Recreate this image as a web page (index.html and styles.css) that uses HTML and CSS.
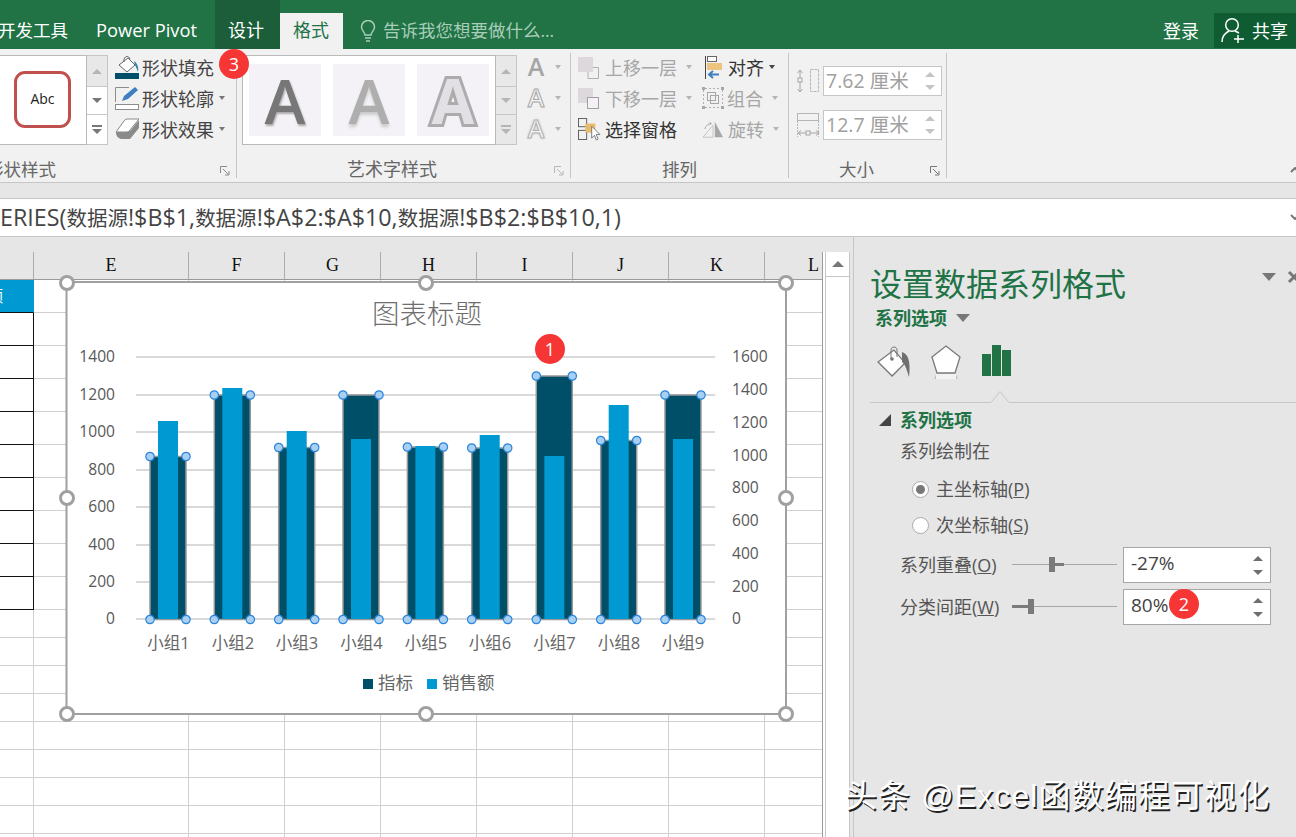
FILE: index.html
```html
<!DOCTYPE html>
<html lang="zh-CN">
<head>
<meta charset="utf-8">
<title>设置数据系列格式</title>
<link rel="stylesheet" href="styles.css">
</head>
<body>
<div class="app">
  <header class="tabs">
    <span class="tab-plain first">开发工具</span>
    <span class="tab-plain pivot">Power Pivot</span>
    <span class="tab-ctx">设计</span>
    <span class="tab-active">格式</span>
    <div class="tellme">
      <svg class="bulb" viewBox="0 0 16 22" width="16" height="22"><path d="M5 15c0-3-3.500-4-3.500-8a6.500 6.500 0 0 1 13 0c0 4-3.500 5-3.500 8z" fill="none" stroke="#a8cdb8" stroke-width="1.500"/><path d="M5 18h6M6 21h4" stroke="#a8cdb8" stroke-width="1.500"/></svg>
      <span>告诉我您想要做什么...</span>
    </div>
    <span class="login">登录</span>
    <div class="share">
      <svg viewBox="0 0 24 26" width="24" height="26"><circle cx="11" cy="8" r="6.300" fill="none" stroke="#fff" stroke-width="1.500"/><path d="M1 25c0-6 3-9 7-11M14 14l4 2" fill="none" stroke="#fff" stroke-width="1.500"/><path d="M17 18v8M13 22h10" stroke="#fff" stroke-width="1.500"/></svg>
      <span>共享</span>
    </div>
  </header>

  <section class="ribbon">
    <div class="group g-shape">
      <div class="group-body">
        <div class="gallery gal-shape"><div class="abc">Abc</div></div>
        <div class="gal-scroll">
          <div class="gal-btn h1 off"><i class="tri-up"></i></div>
          <div class="gal-btn h2"><i class="tri-down"></i></div>
          <div class="gal-btn h3"><i class="tri-more"></i></div>
        </div>
        <div class="cmds c-shape">
          <div class="cmd">
            <svg class="ic24" viewBox="0 0 24 24" width="24" height="24"><rect y="18" width="24" height="6" fill="#004f68"/><path d="M13 3l7 7-8 7-8-7z" fill="#fff" stroke="#666"/><path d="M9 7C8 2 13-1 15 4" fill="none" stroke="#666"/><path d="M19 6c3 2 5 6 4 11-1-3-2-5-3-7z" fill="#2f7fb0"/></svg>
            <span>形状填充</span><i class="caret"></i>
          </div>
          <div class="cmd">
            <svg class="ic24" viewBox="0 0 24 24" width="24" height="24"><rect x=".5" y="18.500" width="23" height="5" fill="#fff" stroke="#8c8c8c"/><path d="M.5 16V1.500H14" fill="none" stroke="#8c8c8c"/><path d="M7 15l2-5L20 1l3 3-10 9z" fill="#3f7fbf"/></svg>
            <span>形状轮廓</span><i class="caret"></i>
          </div>
          <div class="cmd">
            <svg class="ic24" viewBox="0 0 24 24" width="24" height="24"><path d="M1 15c0 4 2 6 5 7h9l9-11V3l-9 11H4z" fill="#8a8a8a"/><path d="M1 15L9 4q1-2 3-2h12l-9 11q-1 2-3 2z" fill="#fff" stroke="#8a8a8a"/></svg>
            <span>形状效果</span><i class="caret"></i>
          </div>
        </div>
      </div>
      <div class="group-foot foot-shape"><span>形状样式</span><svg class="launch" viewBox="0 0 10 10" width="10" height="10"><path d="M.5 7V.5H7M3 3l5 5M9 5v4H5" fill="none" stroke="#8a8a8a"/></svg></div>
    </div>

    <div class="group g-art">
      <div class="group-body">
        <div class="gallery gal-art">
          <div class="wa wa1">A</div>
          <div class="wa wa2">A</div>
          <div class="wa wa3">A</div>
        </div>
        <div class="gal-scroll">
          <div class="gal-btn h1 off"><i class="tri-up"></i></div>
          <div class="gal-btn h2 off"><i class="tri-down"></i></div>
          <div class="gal-btn h3 off"><i class="tri-more"></i></div>
        </div>
        <div class="cmds c-art">
          <div class="cmd off"><span class="mini m1">A</span><i class="caret"></i></div>
          <div class="cmd off"><span class="mini m2">A</span><i class="caret"></i></div>
          <div class="cmd off"><span class="mini m3">A</span><i class="caret"></i></div>
        </div>
      </div>
      <div class="group-foot foot-art"><span>艺术字样式</span><svg class="launch" viewBox="0 0 10 10" width="10" height="10"><path d="M.5 7V.5H7M3 3l5 5M9 5v4H5" fill="none" stroke="#b5b5b5"/></svg></div>
    </div>

    <div class="group g-arr">
      <div class="group-body">
        <div class="cmds c-arr1">
          <div class="cmd off">
            <svg class="ic21" viewBox="0 0 21 24" width="21" height="24"><rect y="2" width="15" height="15" fill="#dcd8dc"/><path d="M15 12.500h5.500v11H10V17" fill="none" stroke="#b0b0b0"/></svg>
            <span>上移一层</span><i class="caret"></i>
          </div>
          <div class="cmd off">
            <svg class="ic21" viewBox="0 0 21 24" width="21" height="24"><rect y="2" width="15" height="15" fill="#dcd8dc"/><rect x="9.500" y="11.500" width="11" height="11" fill="#f4f0f6" stroke="#a0a0a0"/></svg>
            <span>下移一层</span><i class="caret"></i>
          </div>
          <div class="cmd">
            <svg class="ic21" viewBox="0 0 23 26" width="23" height="26"><rect x=".5" y="1.500" width="9" height="9" fill="none" stroke="#555"/><rect x=".5" y="14.500" width="9" height="10" fill="none" stroke="#555"/><rect x="8" y="7" width="11" height="10" fill="#e9bb6f"/><path d="M15 10v13l3-3 2 5 2-1-2-5h4z" fill="#fff" stroke="#666" stroke-width=".9"/></svg>
            <span class="dark">选择窗格</span>
          </div>
        </div>
        <div class="cmds c-arr2">
          <div class="cmd">
            <svg class="ic22" viewBox="0 0 20 24" width="20" height="24"><path d="M.5 1v23" stroke="#444"/><rect x="2.500" y="1.500" width="9" height="5" fill="#fff" stroke="#666"/><rect x="2" y="8" width="15" height="7" fill="#ecc37f"/><path d="M14 19.500H4M8 16l-4 3.500L8 23" fill="none" stroke="#3f7fbf" stroke-width="2"/></svg>
            <span class="dark">对齐</span><i class="caret dk"></i>
          </div>
          <div class="cmd off">
            <svg class="ic-group" viewBox="0 0 22 22" width="22" height="22"><path d="M3 1.500h16M20.500 3v16M3 20.500h16M1.500 3v16" stroke="#b0b0b0" stroke-dasharray="2 2"/><path d="M0 0h3v3H0zM19 0h3v3h-3zM0 19h3v3H0zM19 19h3v3h-3z" fill="#a6a6a6"/><rect x="5.500" y="5.500" width="8" height="8" fill="none" stroke="#a6a6a6"/><rect x="8.500" y="8.500" width="8" height="8" fill="none" stroke="#a6a6a6"/></svg>
            <span>组合</span><i class="caret"></i>
          </div>
          <div class="cmd off">
            <svg class="ic-rot" viewBox="0 0 24 22" width="24" height="20"><path d="M1 20L12 7v13z" fill="none" stroke="#c0c0c0"/><path d="M14 3l9 17h-9z" fill="#a6a6a6"/><path d="M3 11c1-4 4-6 7-6M8 3l2 2-2 2" fill="none" stroke="#a6a6a6"/></svg>
            <span>旋转</span><i class="caret"></i>
          </div>
        </div>
      </div>
      <div class="group-foot"><span>排列</span></div>
    </div>

    <div class="group g-size">
      <div class="group-body sizes">
        <div class="size-row">
          <svg class="ic-size" viewBox="0 0 23 24" width="23" height="24"><path d="M3 1v22M.5 4L3 1l2.500 3M.5 20L3 23l2.500-3" fill="none" stroke="#a6a6a6"/><rect x="13.500" y=".5" width="8" height="22" fill="none" stroke="#b5b5b5" stroke-dasharray="3 1"/><rect x="1" y="9" width="4" height="4" fill="#f1f1f1" stroke="#a6a6a6"/></svg>
          <div class="size-box"><span>7.62 厘米</span><div class="spin off"><i class="tri-up"></i><i class="tri-down"></i></div></div>
        </div>
        <div class="size-row">
          <svg class="ic-size" viewBox="0 0 23 24" width="23" height="24"><rect x=".5" y=".5" width="21" height="7" fill="none" stroke="#b5b5b5"/><path d="M.5 8v16M21.500 8v16" stroke="#b5b5b5" stroke-dasharray="2 1"/><path d="M1 20h21M4 17.500L1 20l3 2.500M19 17.500l3 2.500-3 2.500" fill="none" stroke="#a6a6a6"/><rect x="9" y="18" width="4" height="4" fill="#f1f1f1" stroke="#a6a6a6"/></svg>
          <div class="size-box"><span>12.7 厘米</span><div class="spin off"><i class="tri-up"></i><i class="tri-down"></i></div></div>
        </div>
      </div>
      <div class="group-foot foot-size"><span>大小</span><svg class="launch" viewBox="0 0 10 10" width="10" height="10"><path d="M.5 7V.5H7M3 3l5 5M9 5v4H5" fill="none" stroke="#777"/></svg></div>
    </div>
    <svg class="collapse" viewBox="0 0 10 6" width="10" height="6"><path d="M1 5l4-4 4 4" fill="none" stroke="#777" stroke-width="2"/></svg>
  </section>

  <div class="strip"></div>
  <div class="formula">
    <span>ERIES(<span class="fx-cjk">数据源</span>!$B$1,<span class="fx-cjk">数据源</span>!$A$2:$A$10,<span class="fx-cjk">数据源</span>!$B$2:$B$10,1)</span>
    <svg class="fx-down" viewBox="0 0 10 6" width="10" height="6"><path d="M1 1l4 4 4-4" fill="none" stroke="#777" stroke-width="2"/></svg>
  </div>

  <main class="work">
    <div class="sheet-col">
      <div class="top-gap"></div>
      <div class="sheet-body">
        <div class="cells">
          <div class="col-heads">
            <span class="ch ch-corner"></span>
            <span class="ch ch-e">E</span>
            <span class="ch ch-n">F</span>
            <span class="ch ch-n">G</span>
            <span class="ch ch-n">H</span>
            <span class="ch ch-n">I</span>
            <span class="ch ch-n">J</span>
            <span class="ch ch-n">K</span>
            <span class="ch ch-l">L</span>
          </div>
          <div class="rows">
            <div class="row r33"><div class="tcell thead"><span>额</span></div></div>
            <div class="row r33"><div class="tcell"></div></div>
            <div class="row r33"><div class="tcell"></div></div>
            <div class="row r33"><div class="tcell"></div></div>
            <div class="row r33"><div class="tcell"></div></div>
            <div class="row r33"><div class="tcell"></div></div>
            <div class="row r33"><div class="tcell"></div></div>
            <div class="row r33"><div class="tcell"></div></div>
            <div class="row r33"><div class="tcell"></div></div>
            <div class="row r33"><div class="tcell"></div></div>
            <div class="row r28"></div>
            <div class="row r28"></div>
            <div class="row r28"></div>
            <div class="row r28"></div>
            <div class="row r28"></div>
            <div class="row r28"></div>
            <div class="row r28"></div>
            <div class="row r28"></div>
            <div class="row r28"></div>
          </div>
        </div>
        <div class="vscroll"><div class="vs-up"><i class="tri-up"></i></div></div>
      </div>

      <svg class="chart" viewBox="0 237 850 500" width="850" height="500">
        <defs>
          <g id="h"><circle r="4.200" fill="#a9d0f2" stroke="#2a86dc" stroke-width="1.200"/></g>
          <g id="k"><circle r="6.500" fill="#fff" stroke="#a0a0a0" stroke-width="3"/></g>
        </defs>
        <rect x="66.500" y="282" width="719.500" height="432" fill="#fff" stroke="#a0a0a0" stroke-width="2"/>
        <text class="c-title" x="427" y="324" text-anchor="middle">图表标题</text>
        <g stroke="#d9d9d9" stroke-width="2">
          <path d="M136 357H715M136 395H715M136 432H715M136 470H715M136 507H715M136 545H715M136 582H715M136 619H715"/>
        </g>
        <g class="c-axis" text-anchor="end">
          <text x="115" y="362">1400</text><text x="115" y="400">1200</text><text x="115" y="437">1000</text><text x="115" y="475">800</text><text x="115" y="512">600</text><text x="115" y="550">400</text><text x="115" y="587">200</text><text x="115" y="624">0</text>
        </g>
        <g class="c-axis">
          <text x="732" y="362">1600</text><text x="732" y="395">1400</text><text x="732" y="428">1200</text><text x="732" y="461">1000</text><text x="732" y="493">800</text><text x="732" y="526">600</text><text x="732" y="559">400</text><text x="732" y="592">200</text><text x="732" y="624">0</text>
        </g>
        <g fill="#004f68" stroke="#999" stroke-width="1.500">
          <rect x="150" y="456.500" width="36" height="163"/>
          <rect x="214.300" y="395" width="36" height="224.500"/>
          <rect x="278.700" y="447.500" width="36" height="172"/>
          <rect x="343" y="395" width="36" height="224.500"/>
          <rect x="407.400" y="447" width="36" height="172.500"/>
          <rect x="471.700" y="448" width="36" height="171.500"/>
          <rect x="536.300" y="376" width="36" height="243.500"/>
          <rect x="600.700" y="440.500" width="36" height="179"/>
          <rect x="665" y="395" width="36" height="224.500"/>
        </g>
        <g fill="#0099d1">
          <rect x="158" y="421" width="20" height="198"/>
          <rect x="222.300" y="388" width="20" height="231"/>
          <rect x="286.700" y="431" width="20" height="188"/>
          <rect x="351" y="439" width="20" height="180"/>
          <rect x="415.400" y="446" width="20" height="173"/>
          <rect x="479.700" y="435" width="20" height="184"/>
          <rect x="544.300" y="456" width="20" height="163"/>
          <rect x="608.700" y="405" width="20" height="214"/>
          <rect x="673" y="439" width="20" height="180"/>
        </g>
        <use href="#h" x="150" y="456.500"/><use href="#h" x="186" y="456.500"/>
        <use href="#h" x="214.300" y="395"/><use href="#h" x="250.300" y="395"/>
        <use href="#h" x="278.700" y="447.500"/><use href="#h" x="314.700" y="447.500"/>
        <use href="#h" x="343" y="395"/><use href="#h" x="379" y="395"/>
        <use href="#h" x="407.400" y="447"/><use href="#h" x="443.400" y="447"/>
        <use href="#h" x="471.700" y="448"/><use href="#h" x="507.700" y="448"/>
        <use href="#h" x="536.300" y="376"/><use href="#h" x="572.300" y="376"/>
        <use href="#h" x="600.700" y="440.500"/><use href="#h" x="636.700" y="440.500"/>
        <use href="#h" x="665" y="395"/><use href="#h" x="701" y="395"/>
        <use href="#h" x="150" y="619.500"/><use href="#h" x="186" y="619.500"/>
        <use href="#h" x="214.300" y="619.500"/><use href="#h" x="250.300" y="619.500"/>
        <use href="#h" x="278.700" y="619.500"/><use href="#h" x="314.700" y="619.500"/>
        <use href="#h" x="343" y="619.500"/><use href="#h" x="379" y="619.500"/>
        <use href="#h" x="407.400" y="619.500"/><use href="#h" x="443.400" y="619.500"/>
        <use href="#h" x="471.700" y="619.500"/><use href="#h" x="507.700" y="619.500"/>
        <use href="#h" x="536.300" y="619.500"/><use href="#h" x="572.300" y="619.500"/>
        <use href="#h" x="600.700" y="619.500"/><use href="#h" x="636.700" y="619.500"/>
        <use href="#h" x="665" y="619.500"/><use href="#h" x="701" y="619.500"/>
        <g class="c-cat" text-anchor="middle">
          <text x="168.500" y="649">小组1</text><text x="233" y="649">小组2</text><text x="297" y="649">小组3</text><text x="361.500" y="649">小组4</text><text x="426" y="649">小组5</text><text x="490" y="649">小组6</text><text x="554.500" y="649">小组7</text><text x="619" y="649">小组8</text><text x="683" y="649">小组9</text>
        </g>
        <rect x="363" y="679" width="10" height="10" fill="#004f68"/>
        <text class="c-leg" x="378" y="689">指标</text>
        <rect x="427" y="679" width="10" height="10" fill="#0099d1"/>
        <text class="c-leg" x="442" y="689">销售额</text>
        <use href="#k" x="67" y="283"/><use href="#k" x="426" y="283"/><use href="#k" x="786" y="283"/>
        <use href="#k" x="67" y="498"/><use href="#k" x="786" y="498"/>
        <use href="#k" x="67" y="714"/><use href="#k" x="426" y="714"/><use href="#k" x="786" y="714"/>
      </svg>
    </div>

    <aside class="panel">
      <div class="panel-in">
        <div class="p-head">
          <h1>设置数据系列格式</h1>
          <svg class="p-caret" viewBox="0 0 14 8" width="14" height="8"><path d="M0 0h14L7 8z" fill="#777"/></svg>
          <svg class="p-x" viewBox="0 0 14 14" width="14" height="14"><path d="M2 2l10 10M12 2L2 12" stroke="#777" stroke-width="3"/></svg>
        </div>
        <div class="p-sub"><b>系列选项</b><svg viewBox="0 0 14 8" width="14" height="8"><path d="M0 0h14L7 8z" fill="#777"/></svg></div>
        <div class="p-icons">
          <svg viewBox="0 0 34 34" width="34" height="34"><path d="M16 5l12 12-12 14L1 18z" fill="#fff" stroke="#777" stroke-width="1.300" transform="rotate(4 15 18)"/><path d="M14 14V5c0-4 6-4 6 0v7" fill="none" stroke="#777"/><circle cx="15" cy="14" r="1.800" fill="#777"/><path d="M25 7c6 2 9 9 7 25-2-6-3-12-7-15z" fill="#6f6f6f"/></svg>
          <svg viewBox="0 0 30 36" width="30" height="36"><path d="M15 1l14 11-5 16H6L1 12z" fill="#fff" stroke="#7a7a7a" stroke-width="1.300"/><path d="M6 28l-2 6M24 28l2 6" stroke="#b0b0b0"/><rect x="5" y="29" width="20" height="5" fill="#f2f2f2"/></svg>
          <svg class="p-bars" viewBox="0 0 29 31" width="29" height="31"><path d="M0 9h9v22H0zM10 0h9v31h-9zM20 5h9v26h-9z" fill="#217346"/></svg>
        </div>
        <svg class="p-notch" viewBox="0 0 426 13" width="426" height="13"><path d="M0 12.500H121L130 1.500l9 11H426" fill="none" stroke="#c6c6c6"/></svg>
        <div class="p-sec"><svg viewBox="0 0 12 12" width="12" height="12"><path d="M12 0v12H0z" fill="#444"/></svg><b>系列选项</b></div>
        <div class="p-body">
          <div class="p-line first-line">系列绘制在</div>
          <div class="p-line radio-1"><i class="radio on"></i><span>主坐标轴(<u>P</u>)</span></div>
          <div class="p-line radio-2"><i class="radio"></i><span>次坐标轴(<u>S</u>)</span></div>
          <div class="p-ctl ctl-1">
            <span class="ctl-label">系列重叠(<u>O</u>)</span>
            <svg class="slider" viewBox="0 0 105 16" width="105" height="16"><path d="M0 7.500h105" stroke="#a6a6a6"/><path d="M37 0h6v15h-6z" fill="#7a7a7a"/><path d="M43 6h9v3h-9z" fill="#7a7a7a"/></svg>
            <div class="num"><span>-27%</span><div class="spin"><i class="tri-up"></i><i class="tri-down"></i></div></div>
          </div>
          <div class="p-ctl ctl-2">
            <span class="ctl-label">分类间距(<u>W</u>)</span>
            <svg class="slider" viewBox="0 0 105 16" width="105" height="16"><path d="M0 7.500h105" stroke="#a6a6a6"/><path d="M0 6h16v3H0z" fill="#7a7a7a"/><path d="M16 0h6v15h-6z" fill="#7a7a7a"/></svg>
            <div class="num"><span>80%</span><div class="spin"><i class="tri-up"></i><i class="tri-down"></i></div></div>
          </div>
        </div>
      </div>
    </aside>
  </main>

  <span class="badge b1">1</span>
  <span class="badge b2">2</span>
  <span class="badge b3">3</span>
  <div class="mark">头条 @Excel函数编程可视化</div>
</div>
</body>
</html>
```

FILE: styles.css
```css
* { box-sizing: border-box; }
html, body { margin: 0; padding: 0; }
body { font-family: "Open Sans", "Noto Sans CJK SC", sans-serif; color: #444; background: #e6e6e6; }
i { display: block; font-style: normal; }
svg { display: block; flex: none; }

.app { position: relative; width: 1296px; height: 837px; overflow: hidden; display: flex; flex-direction: column; }

/* title tabs */
.tabs { flex: none; height: 49px; background: #217346; color: #fff; display: flex; align-items: stretch; font-size: 18px; }
.tabs span { white-space: nowrap; }
.tab-plain { padding-top: 17px; line-height: 26px; }
.first { margin-left: -2px; font-size: 17.5px; }
.pivot { margin-left: 28px; font-size: 18.300px; }
.tab-ctx { margin-left: 18px; width: 65px; background: #1b5e39; text-align: center; padding: 17px 3px 0 0; line-height: 26px; }
.tab-active { width: 63px; margin-top: 13px; background: #f1f1f1; color: #217346; text-align: center; padding: 4px 1px 0 0; line-height: 26px; }
.tellme { margin-left: 17px; padding-top: 17px; display: flex; color: #a8cdb8; font-size: 17.500px; line-height: 26px; }
.bulb { margin: 3px 7px 0 0; }
.login { margin-left: auto; padding-top: 18px; line-height: 26px; }
.share { margin-left: 15px; width: 82px; height: 35px; margin-top: 13px; background: #0f5c33; display: flex; align-items: center; padding: 0 0 2px 7px; gap: 7px; }

/* ribbon */
.ribbon { position: relative; flex: none; height: 134px; background: #f1f1f1; border-bottom: 1px solid #c6c6c6; padding-top: 4px; display: flex; align-items: flex-start; }
.group { height: 125px; border-right: 1px solid #c6c6c6; display: flex; flex-direction: column; flex: none; }
.g-shape { width: 237px; }
.g-art { width: 334px; }
.g-arr { width: 218px; }
.g-size { width: 158px; }
.group-body { height: 104px; flex: none; display: flex; }
.group-foot { position: relative; flex: none; height: 24px; margin-top: 0; line-height: 24px; font-size: 17.500px; color: #666; text-align: center; white-space: nowrap; }
.foot-shape { text-align: left; margin-left: -14px; }
.foot-art { padding-right: 23px; font-size: 18px; }
.foot-size { padding-right: 22px; }
.launch { position: absolute; right: 6px; top: 9px; }

.gallery { height: 90px; margin-top: 2px; background: #fff; border: 1px solid #b9b9b9; flex: none; }
.gal-shape { width: 87px; border-left: 0; display: flex; align-items: center; justify-content: center; }
.abc { width: 57px; height: 57px; margin: 0 1px 1px 0; padding-bottom: 3px; border: 3px solid #c0504d; border-radius: 11px; display: flex; align-items: center; justify-content: center; font-size: 14px; color: #222; }
.gal-art { width: 254px; margin-left: 5px; display: flex; gap: 12px; padding: 8px 0 0 6px; }
.wa { width: 72px; height: 72px; background: #f5f2f7; text-align: center; font-size: 62px; line-height: 72px; font-weight: 600; }
.wa1 { color: #777; text-shadow: 1px 2px 2px #aaa; }
.wa2 { color: #aeaeae; text-shadow: 0 3px 3px #ccc; }
.wa3 { color: #e2e0e4; font-weight: 700; -webkit-text-stroke: 6px #acacac; paint-order: stroke fill; }

.gal-scroll { width: 21px; height: 90px; margin-top: 2px; display: flex; flex-direction: column; flex: none; border: 1px solid #c6c6c6; border-left: 0; }
.gal-btn { display: flex; align-items: center; justify-content: center; background: #fff; border-bottom: 1px solid #c6c6c6; color: #777; }
.gal-btn.h1 { height: 31px; }
.gal-btn.h2 { height: 28px; }
.gal-btn.h3 { flex: 1; border-bottom: 0; }
.gal-btn.off { background: #e8e8e8; color: #b5b5b5; }
.tri-up { width: 0; height: 0; border-left: 5px solid transparent; border-right: 5px solid transparent; border-bottom: 5px solid currentColor; }
.tri-down { width: 0; height: 0; border-left: 5px solid transparent; border-right: 5px solid transparent; border-top: 5px solid currentColor; }
.tri-more { width: 10px; height: 9px; border-top: 2px solid currentColor; position: relative; }
.tri-more::after { content: ""; position: absolute; left: 0; top: 2px; border-left: 5px solid transparent; border-right: 5px solid transparent; border-top: 5px solid currentColor; }

.cmds { display: flex; flex-direction: column; flex: none; margin-top: -2px; }
.cmd { height: 31px; display: flex; align-items: center; font-size: 18px; color: #444; white-space: nowrap; }
.cmd.off { color: #a6a6a6; }
.dark { color: #333; }
.caret { width: 0; height: 0; margin-left: 5px; border-left: 3.500px solid transparent; border-right: 3.500px solid transparent; border-top: 4px solid #777; }
.cmd.off .caret { border-top-color: #b5b5b5; margin-left: 9px; }
.caret.dk { border-top-color: #444; margin-left: 5px; }
.c-shape { margin-left: 7px; }
.ic24 { margin-right: 3px; }
.c-art { margin-left: 9px; }
.mini { width: 20px; text-align: center; font-weight: 600; font-size: 25px; line-height: 31px; }
.m1 { color: #a6a6a6; }
.m2 { color: #f4f4f4; -webkit-text-stroke: 1px #a6a6a6; }
.m3 { color: #f4f4f4; -webkit-text-stroke: 1px #b0b0b0; text-shadow: 0 0 3px #bbb; }
.c-art .cmd.off .caret { margin-left: 9px; }
.c-arr1 { margin-left: 7px; }
.ic21 { width: 21px; margin-right: 6px; overflow: visible; }
.c-arr2 { margin-left: 13px; }
.ic22 { width: 20px; margin-right: 3px; overflow: visible; }
.ic-group { margin: 0 3px 0 -3px; }
.ic-rot { margin: 0 3px 0 -4px; }

.sizes { flex-direction: column; padding: 13px 0 0 8px; gap: 14px; }
.size-row { display: flex; align-items: center; gap: 3px; height: 30px; }
.size-box { width: 119px; height: 30px; background: #fff; border: 1px solid #c6c6c6; display: flex; align-items: center; justify-content: space-between; padding: 0 6px 0 2px; font-size: 19.500px; color: #a0a0a0; white-space: nowrap; }
.size-box > span { padding-bottom: 4px; }
.spin { display: flex; flex-direction: column; gap: 8px; color: #6e6e6e; }
.spin.off { color: #c4c4c4; }
.collapse { position: absolute; right: -4px; top: 118px; }

.strip { flex: none; height: 15px; background: #e6e6e6; }
.formula { flex: none; height: 39px; background: #fff; border-top: 1px solid #c6c6c6; border-bottom: 1px solid #c6c6c6; display: flex; align-items: center; justify-content: space-between; font-size: 23.300px; color: #444; white-space: nowrap; padding-bottom: 2px; }
.fx-cjk { font-size: 20.500px; }
.formula svg { margin-right: -4px; }

/* worksheet */
.work { flex: 1; display: flex; min-height: 0; }
.sheet-col { position: relative; width: 850px; flex: none; display: flex; flex-direction: column; }
.top-gap { height: 15px; flex: none; }
.sheet-body { flex: 1; display: flex; min-height: 0; border-right: 1px solid #c6c6c6; background: #fff; }
.cells { width: 823px; flex: none; border-right: 1px solid #9a9a9a; }
.col-heads { height: 28px; background: #e6e6e6; border-bottom: 1px solid #9a9a9a; display: flex; font-family: "Liberation Serif", serif; font-size: 18px; line-height: 27px; color: #111; }
.ch { border-right: 1px solid #ababab; text-align: center; flex: none; }
.ch-corner { width: 34px; }
.ch-e { width: 155px; }
.ch-n { width: 96px; }
.ch-l { width: 58px; border-right: 0; text-align: left; padding-left: 43px; }
.rows {
  background-image: linear-gradient(#d0d0d0, #d0d0d0), linear-gradient(#d0d0d0, #d0d0d0), linear-gradient(#d0d0d0, #d0d0d0), linear-gradient(#d0d0d0, #d0d0d0), linear-gradient(#d0d0d0, #d0d0d0), linear-gradient(#d0d0d0, #d0d0d0), linear-gradient(#d0d0d0, #d0d0d0), linear-gradient(#d0d0d0, #d0d0d0);
  background-size: 1px 100%;
  background-repeat: no-repeat;
  background-position: 33px 0, 188px 0, 284px 0, 380px 0, 476px 0, 572px 0, 668px 0, 764px 0;
}
.row { border-bottom: 1px solid #d0d0d0; display: flex; align-items: flex-start; }
.r33 { height: 33px; }
.r28 { height: 28px; }
.tcell { width: 34px; height: 33px; flex: none; background: #fff; border-right: 1px solid #111; border-bottom: 1px solid #111; }
.thead { background: #0099d1; border-color: #0099d1; border-bottom-color: #111; overflow: hidden; color: #fff; font-size: 16px; line-height: 32px; }
.thead span { display: block; margin-left: -13px; }
.vscroll { flex: 1; border-left: 1px solid #c6c6c6; margin-left: 2px; background: #fff; }
.vs-up { height: 25px; border-bottom: 1px solid #c6c6c6; color: #777; display: flex; align-items: center; justify-content: center; }
.vs-up .tri-up { border-left-width: 6px; border-right-width: 6px; border-bottom-width: 6px; }
.chart { position: absolute; left: 0; top: 0; }
.c-title { font-size: 27.500px; fill: #6e6e6e; font-weight: 300; }
.c-axis { font-size: 15.600px; fill: #595959; }
.c-cat { font-size: 16.500px; fill: #666; }
.c-leg { font-size: 17.500px; fill: #666; }

/* format pane */
.panel { flex: 1; background: #e6e6e6; padding-left: 3px; min-width: 0; overflow: hidden; }
.panel-in { height: 100%; border-left: 1px solid #c6c6c6; padding: 27px 0 0 16px; }
.p-head { display: flex; align-items: flex-start; }
.p-head h1 { margin: 0; font-size: 32px; line-height: 40px; font-weight: 400; color: #217346; white-space: nowrap; }
.p-caret { margin: 9px 0 0 136px; }
.p-x { margin: 6px 0 0 11px; }
.p-sub { display: flex; align-items: center; gap: 9px; margin: 2px 0 0 5px; line-height: 24px; font-size: 18px; color: #217346; }
.p-icons { display: flex; gap: 20px; margin: 15px 0 0 7px; align-items: flex-start; }
.p-bars { margin-left: 1px; }
.p-notch { margin-top: 9px; }
.p-sec { display: flex; align-items: center; gap: 9px; margin: 5px 0 0 9px; line-height: 24px; font-size: 18px; color: #217346; }
.p-body { margin-left: 30px; font-size: 18px; color: #555; }
.p-line { line-height: 24px; display: flex; align-items: center; }
.first-line { margin-top: 7px; }
.radio-1 { margin: 14px 0 0 12px; gap: 7px; }
.radio-2 { margin: 12px 0 0 12px; gap: 7px; }
.radio { width: 17px; height: 17px; border-radius: 50%; background: #fff; border: 1px solid #aaa; position: relative; }
.radio.on::after { content: ""; position: absolute; left: 3px; top: 3px; width: 9px; height: 9px; border-radius: 50%; background: #777; }
.p-ctl { display: flex; align-items: center; height: 36px; }
.ctl-1 { margin-top: 10px; }
.ctl-2 { margin-top: 6px; }
.ctl-label { width: 112px; flex: none; white-space: nowrap; padding-bottom: 2px; }
.num { width: 148px; height: 36px; margin-left: 6px; background: #fff; border: 1px solid #a6a6a6; display: flex; align-items: center; justify-content: space-between; padding: 0 7px 0 7px; font-size: 19px; color: #444; }
.num > span { padding-bottom: 5px; }
.num .spin { gap: 9px; }

/* overlays */
.badge { position: absolute; width: 30px; height: 30px; border-radius: 50%; background: #f63535; color: #fff; font-size: 18px; line-height: 30px; text-align: center; }
.b1 { left: 535px; top: 334px; }
.b2 { left: 1169px; top: 589px; }
.b3 { left: 219px; top: 49px; }
.mark { position: absolute; left: 845px; top: 776px; font-family: "Liberation Sans", "Noto Sans CJK SC", sans-serif; font-size: 32px; letter-spacing: 1.100px; line-height: 40px; color: #fff; white-space: nowrap; text-shadow: 1.500px 1.500px 0 #222; }
```
